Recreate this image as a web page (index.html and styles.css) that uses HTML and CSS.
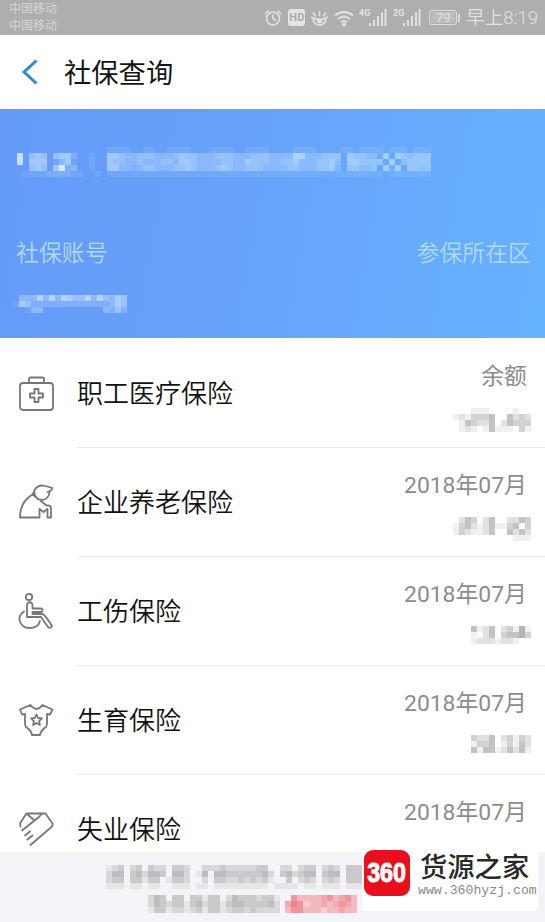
FILE: index.html
```html
<!DOCTYPE html>
<html lang="zh-CN">
<head>
<meta charset="utf-8">
<title>社保查询</title>
<link rel="stylesheet" href="styles.css">
</head>
<body>
<div class="app">
  <div class="status">
    <div class="carriers"><span>中国移动</span><span>中国移动</span></div>
    <div class="indicators">
      <svg class="glyph" width="18" height="18" viewBox="0 0 18 18"><circle cx="9" cy="9.5" r="6.5"/><path d="M9 5.500v4l3 2M1 5l3.500-3.500M17 5l-3.500-3.500"/></svg>
      <span class="hd">HD</span>
      <svg class="glyph eye" width="19" height="18" viewBox="0 0 19 18"><path d="M1 8q8.500 5 17 0M3 10q1 6 6.500 6t6.500-6M9.500 2v5M3 3.500l3 4M16 3.500l-3 4"/><circle class="pupil" cx="9.500" cy="12" r="2.500"/></svg>
      <svg class="glyph wifi" width="20" height="18" viewBox="0 0 20 18"><path d="M1 6.500q9-7 18 0M4 10q6-5 12 0M7 13.200q3-2.500 6 0"/><circle cx="10" cy="15.500" r="1"/></svg>
      <svg class="signal" width="28" height="20" viewBox="0 0 28 20"><text x="0" y="9">4G</text><path d="M10 16h2v3h-2zM14 13h2v6h-2zM18 9h2v10h-2zM22 5.500h2v13.500h-2zM25.500 2h2v17h-2z"/></svg>
      <svg class="signal second" width="28" height="20" viewBox="0 0 28 20"><text x="0" y="9">2G</text><path d="M10 16h2v3h-2zM14 13h2v6h-2zM18 9h2v10h-2zM22 5.500h2v13.500h-2zM25.500 2h2v17h-2z"/></svg>
      <span class="battery">79</span>
      <span class="clock">早上8:19</span>
    </div>
  </div>

  <header class="header">
    <svg class="back" width="18" height="26" viewBox="0 0 18 26"><path d="M16.500 1.500L4 13l12.500 11.500"/></svg>
    <h1>社保查询</h1>
  </header>

  <section class="card">
    <svg class="mosaic name" data-tone="#d4ebff" data-rows="
000000000000000111100110011110001111001111000011110000110111101110111
804540455200100554334443334544333444333444333366333444054433150543444
805550135100100544334333443554333344335444334453334453055444405034444
004540592300100553323443334454333454334443333443334452044334051504434
011112222110010111111111111111111111111111111111111111111111101111111"></svg>
    <div class="labels"><span>社保账号</span><span>参保所在区</span></div>
    <svg class="mosaic account" data-tone="#dfefff" data-rows="
0333636365446364354
1542222222222222354
0013300000000003242"></svg>
  </section>

  <main class="list">
    <div class="row">
      <svg class="icon" viewBox="0 0 36 36"><rect x="2" y="8" width="33" height="27" rx="3"/><path d="M11 8V4q0-1.500 1.500-1.500h12Q26 2.500 26 4v4M16.500 14h4v4.500H25v4h-4.500V27h-4v-4.500H12v-4h4.500z"/></svg>
      <div class="body"><span class="title">职工医疗保险</span>
        <div class="detail"><span>余额</span><svg class="mosaic value" data-tone="#777" data-rows="
0001110000100
1213334004232
0143224024333
0121014111031"></svg></div></div>
    </div>
    <div class="row">
      <svg class="icon" viewBox="0 0 36 36"><path d="M14.500 10.500C5 16 2 25 2 33.500h19.500V25l4 3 4-3v8.500H33V24q0-3-4.500-2.500L14.500 10.500zM14.500 10.500l2-3.500C16 12 19 16 23.500 16c5 0 8-4 8-8M16.500 6q4-6 11-4l7 2q-1 3-5 4"/></svg>
      <div class="body"><span class="title">企业养老保险</span>
        <div class="detail"><span>2018年07月</span><svg class="mosaic value" data-tone="#777" data-rows="
0243024002243
1342124113403
1321124004242
0000000000111"></svg></div></div>
    </div>
    <div class="row">
      <svg class="icon" viewBox="0 0 36 36"><circle cx="11" cy="4" r="3.200"/><path d="M9 24V13c0-5 5.500-5 5.500 0v2.500h9q2 1.500 0 3.500h-9v2h9.500c3 0 6 6 10 12q-1.500 3-4 1l-7-10zM6 18.500c-9 6-3 16.500 5 16.500 6 0 10-3 11-7"/></svg>
      <div class="body"><span class="title">工伤保险</span>
        <div class="detail"><span>2018年07月</span><svg class="mosaic value" data-tone="#777" data-rows="
0004124023151
0001024034453
0001222122100"></svg></div></div>
    </div>
    <div class="row">
      <svg class="icon" viewBox="0 0 36 36"><path d="M12.500 3L2 7.500l2 5 3-.5v10c0 5 6 4 7 11h8c1-7 7-6 7-11V12l3 .5 2.500-5L24.500 3q-6 8-12 0z"/><path d="M18.500 12.500l1.600 3.500 3.900.4-2.900 2.700.8 3.900-3.400-2-3.400 2 .8-3.900-2.900-2.700 3.900-.4z"/></svg>
      <div class="body"><span class="title">生育保险</span>
        <div class="detail"><span>2018年07月</span><svg class="mosaic value" data-tone="#777" data-rows="
0003224023132
0001334013142
0004144124241"></svg></div></div>
    </div>
    <div class="row last">
      <svg class="icon" viewBox="0 0 36 36"><path d="M2.500 15.500q-1-2 0-4l6-9h19l7 10q.500 2-1 3.500L12.500 34M4 19.500L21 6l3-3.500M9 3l7 6M7 24.500l5-4M9.500 28.500l5-4"/></svg>
      <div class="body"><span class="title">失业保险</span>
        <div class="detail"><span>2018年07月</span></div></div>
    </div>
  </main>

  <footer class="footer">
    <svg class="mosaic note" data-tone="#777" data-rows="
1230230322033200222322222330022023302320333333
2440342443044201404433333342034234403440333333
2330331330133200203322323231003023202320333333
1110110110011101101111111110111101101110111111"></svg>
    <svg class="mosaic note second-line" data-tone="#777" data-rows="
2430330331330243332331
2432331342331344333342
1331221231331233232222"></svg>
    <svg class="mosaic note alert" data-tone="#f04450" data-rows="
053333453453
465233434543
355333233433"></svg>
    <div class="watermark">
      <div class="logo"><span>360</span></div>
      <div class="brand"><strong>货源之家</strong><span>www.360hyzj.com</span></div>
    </div>
  </footer>
</div>
<script src="mosaic.js"></script>
</body>
</html>
```
FILE: styles.css
```css
* { box-sizing: border-box; }
body { margin: 0; background: #fff; font-family: Roboto, "Noto Sans CJK SC", sans-serif; }
.app { width: 545px; height: 922px; display: flex; flex-direction: column; overflow: hidden; }
svg { display: block; flex: none; }

.status { height: 35px; flex: none; background: #aeaeae; color: #e2e2e2; display: flex; justify-content: space-between; padding: 0 7px 0 9px; }
.carriers { display: flex; flex-direction: column; font-size: 12px; line-height: 17px; padding-top: 1px; color: #d6d6d6; }
.indicators { display: flex; align-items: center; }
.glyph { fill: none; stroke: #e2e2e2; stroke-width: 1.6; }
.pupil { fill: #e2e2e2; stroke: none; }
.eye { margin-left: 5px; }
.wifi { margin-left: 5px; stroke-width: 2; }
.hd { width: 17px; height: 17px; margin-left: 6px; border-radius: 3px; background: #e4e4e4; color: #aaa; font-size: 11px; font-weight: 700; line-height: 17px; text-align: center; }
.signal { margin-left: 5px; margin-top: -2px; fill: #e2e2e2; }
.signal text { font-size: 9px; font-weight: 700; }
.signal.second { margin-left: 6px; }
.battery { position: relative; width: 28px; height: 15px; margin-left: 8px; border: 1px solid #ddd; border-radius: 3px; background: #bdbdbd; box-shadow: inset 0 0 0 1px #aeaeae; font-size: 13px; line-height: 14px; text-align: center; }
.battery::after { content: ""; position: absolute; right: -4px; top: 3px; width: 2px; height: 8px; background: #ddd; }
.clock { margin-left: 9px; font-size: 18.5px; line-height: 34px; font-weight: 350; white-space: nowrap; }

.header { height: 74px; flex: none; display: flex; align-items: center; padding-left: 20px; }
.back { fill: none; stroke: #318bd0; stroke-width: 3; }
.header h1 { margin: 3px 0 0 26px; font-size: 27.3px; font-weight: 400; line-height: 40px; color: #151515; }

.card { height: 229px; flex: none; padding: 38px 14px 0 16px; background: linear-gradient(100deg, #659af9 0%, #66a2fa 45%, #67b2fe 100%); }
.name { margin-left: 1px; }
.labels { display: flex; justify-content: space-between; margin-top: 60px; font-size: 22.9px; line-height: 34px; font-weight: 350; color: #b0daf8; }
.account { margin: 24px 0 0 -3px; }

.list { flex: none; height: 514px; padding-top: 1px; }
.row { height: 109px; display: flex; padding-left: 18px; }
.row.last { height: 77px; }
.icon { width: 36px; height: 36px; margin-top: 36px; fill: none; stroke: #777; stroke-width: 1.8; stroke-linejoin: round; stroke-linecap: round; }
.body { flex: 1; margin-left: 23px; display: flex; justify-content: space-between; border-bottom: 1px solid #e9e9e9; }
.last .body { border: 0; }
.title { font-size: 26px; line-height: 40px; font-weight: 350; margin-top: 35px; color: #111; }
.detail { display: flex; flex-direction: column; align-items: flex-end; padding: 21px 18px 0 0; font-size: 22.9px; line-height: 34px; font-weight: 400; color: #8c8c8c; }
.value { margin: 14px -4px 0 0; }

.footer { height: 70px; flex: none; position: relative; background: #f4f4f8; padding: 13px 0 0 106px; display: grid; grid-template-columns: 42px 137px 1fr; grid-template-rows: 30px 20px; }
.note { grid-column: 1 / 4; grid-row: 1; }
.second-line { grid-column: 2; grid-row: 2; }
.alert { grid-column: 3; grid-row: 2; }
.watermark { position: absolute; left: 362px; top: -2px; width: 176px; height: 61px; background: #fff; display: flex; padding-left: 2px; }
.logo { width: 46px; height: 46px; flex: none; display: flex; justify-content: center; border-radius: 9px; background: #e90f1c; color: #fff; font: 700 27px/46px "Liberation Sans", sans-serif; }
.logo span { transform: scaleX(.86); -webkit-text-stroke: 1px #fff; }
.brand { margin-left: 10px; display: flex; flex-direction: column; white-space: nowrap; }
.brand strong { font: 500 27.3px/30px "Noto Sans CJK SC", sans-serif; color: #292929; }
.brand span { margin-top: 4px; margin-left: -2px; font: 13.2px/14px "Liberation Mono", monospace; color: #888; }
```
FILE: mosaic.js
```js
// Draws masked text: each digit is the strength of one 6px cell.
const SIZE = 6;
document.querySelectorAll('.mosaic').forEach(svg => {
  const rows = svg.dataset.rows.trim().split(/\s+/);
  const cols = Math.max(...rows.map(r => r.length));
  svg.setAttribute('width', cols * SIZE);
  svg.setAttribute('height', rows.length * SIZE);
  rows.forEach((row, y) => [...row].forEach((level, x) => {
    if (level === '0') return;
    const cell = document.createElementNS('http://www.w3.org/2000/svg', 'rect');
    cell.setAttribute('x', x * SIZE);
    cell.setAttribute('y', y * SIZE);
    cell.setAttribute('width', SIZE);
    cell.setAttribute('height', SIZE);
    cell.setAttribute('fill', svg.dataset.tone);
    cell.setAttribute('fill-opacity', level * 0.11);
    svg.appendChild(cell);
  }));
});
```
